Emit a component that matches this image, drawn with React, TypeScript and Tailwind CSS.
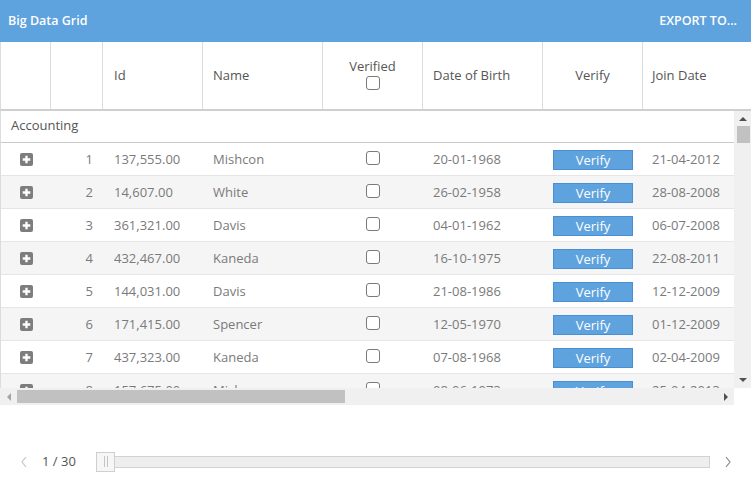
import { FC } from "react";

type Row = { n: number; id: string; name: string; dob: string; join: string };

const rows: Row[] = [
	{ n: 1, id: "137,555.00", name: "Mishcon", dob: "20-01-1968", join: "21-04-2012" },
	{ n: 2, id: "14,607.00", name: "White", dob: "26-02-1958", join: "28-08-2008" },
	{ n: 3, id: "361,321.00", name: "Davis", dob: "04-01-1962", join: "06-07-2008" },
	{ n: 4, id: "432,467.00", name: "Kaneda", dob: "16-10-1975", join: "22-08-2011" },
	{ n: 5, id: "144,031.00", name: "Davis", dob: "21-08-1986", join: "12-12-2009" },
	{ n: 6, id: "171,415.00", name: "Spencer", dob: "12-05-1970", join: "01-12-2009" },
	{ n: 7, id: "437,323.00", name: "Kaneda", dob: "07-08-1968", join: "02-04-2009" },
	{ n: 8, id: "157,675.00", name: "Mishcon", dob: "08-06-1973", join: "25-04-2013" },
];

const PlusIcon: FC = () => (
	<svg width="13" height="13" viewBox="0 0 13 13">
		<rect x="0" y="0" width="13" height="13" rx="2" fill="#7d7d7d" />
		<path d="M6.5 2.7v7.6M2.7 6.5h7.6" stroke="#fff" strokeWidth="2.3" />
	</svg>
);

const Checkbox: FC = () => <span className="block w-[14px] h-[14px] rounded-[3px] border border-[#7a7a7a] bg-white" />;

const Triangle: FC<{ dir: "up" | "down" | "left" | "right" }> = ({ dir }) => {
	const d = {
		up: "M0 5 L4 1 L8 5 Z",
		down: "M0 1 L4 5 L8 1 Z",
		left: "M5 0 L1 4 L5 8 Z",
		right: "M1 0 L5 4 L1 8 Z",
	}[dir];
	const vertical = dir === "up" || dir === "down";
	return (
		<svg width={vertical ? 8 : 6} height={vertical ? 6 : 8} viewBox={vertical ? "0 0 8 6" : "0 0 6 8"}>
			<path d={d} fill={dir === "left" ? "#a3a3a3" : "#505050"} />
		</svg>
	);
};

const App: FC = () => {
	return (
		<div className="w-[751px] h-[482px] bg-white overflow-hidden font-['Open_Sans',sans-serif] text-[13px] text-[#7a7a7a]">
			{/* title bar */}
			<div className="h-[42px] bg-[#5ea2de] flex items-center justify-between pl-[8px] pr-[14px] text-white text-[12.5px] font-semibold">
				<span>Big Data Grid</span>
				<span>EXPORT TO...</span>
			</div>

			{/* column headers */}
			<div className="flex h-[69px] border-b-2 border-[#cfcfcf] border-l border-l-[#dcdcdc] text-[#555] text-[13px] whitespace-nowrap">
				<div className="w-[50px] shrink-0 border-r border-[#dcdcdc]" />
				<div className="w-[52px] shrink-0 border-r border-[#dcdcdc]" />
				<div className="w-[100px] shrink-0 border-r border-[#dcdcdc] flex items-center pl-[11px]">Id</div>
				<div className="w-[120px] shrink-0 border-r border-[#dcdcdc] flex items-center pl-[10px]">Name</div>
				<div className="w-[100px] shrink-0 border-r border-[#dcdcdc] flex flex-col items-center justify-center gap-[1px] pb-[4px]">
					<span className="leading-[18px]">Verified</span>
					<Checkbox />
				</div>
				<div className="w-[120px] shrink-0 border-r border-[#dcdcdc] flex items-center pl-[10px]">Date of Birth</div>
				<div className="w-[100px] shrink-0 border-r border-[#dcdcdc] flex items-center justify-center">Verify</div>
				<div className="w-[110px] shrink-0 flex items-center pl-[9px]">Join Date</div>
			</div>

			{/* body with scrollbars */}
			<div className="flex h-[277px]">
				<div className="w-[734px] overflow-hidden border-l border-[#dcdcdc]">
					<div className="w-[760px]">
						<div className="h-[32px] flex items-center pl-[10px] pb-[1px] border-b border-[#c8c8c8] text-[#555]">
							Accounting
						</div>
						{rows.map((r, i) => (
							<div
								key={r.n}
								className={`flex h-[33px] items-center pt-[1px] border-b border-[#e6e6e6] whitespace-nowrap ${i % 2 === 1 ? "bg-[#f5f5f5]" : "bg-white"}`}
							>
								<div className="w-[50px] shrink-0 flex justify-center pb-[1px]">
									<PlusIcon />
								</div>
								<div className="w-[52px] shrink-0 text-right pr-[10px]">{r.n}</div>
								<div className="w-[100px] shrink-0 pl-[11px]">{r.id}</div>
								<div className="w-[120px] shrink-0 pl-[10px]">{r.name}</div>
								<div className="w-[100px] shrink-0 flex justify-center pb-[3px]">
									<Checkbox />
								</div>
								<div className="w-[120px] shrink-0 pl-[10px]">{r.dob}</div>
								<div className="w-[100px] shrink-0 flex justify-center">
									<button className="w-[80px] h-[20px] bg-[#5ea2de] border border-[#4a8fd6] text-white text-[13px] leading-[18px]">
										Verify
									</button>
								</div>
								<div className="w-[110px] shrink-0 pl-[9px]">{r.join}</div>
							</div>
						))}
					</div>
				</div>
				<div className="w-[17px] bg-[#f0f0f0] flex flex-col items-center">
					<div className="h-[15px] flex items-center justify-center">
						<Triangle dir="up" />
					</div>
					<div className="w-[13px] h-[17px] bg-[#c1c1c1] ml-[2px]" />
					<div className="flex-1" />
					<div className="h-[16px] flex items-center justify-center">
						<Triangle dir="down" />
					</div>
				</div>
			</div>
			<div className="flex h-[17px]">
				<div className="w-[734px] bg-[#f0f0f0] flex items-center">
					<div className="w-[17px] flex justify-center">
						<Triangle dir="left" />
					</div>
					<div className="w-[328px] h-[13px] bg-[#c1c1c1]" />
					<div className="flex-1" />
					<div className="w-[17px] flex justify-center">
						<Triangle dir="right" />
					</div>
				</div>
			</div>

			{/* pager */}
			<div className="h-[77px] flex items-center pl-[20px] pr-[19px] pt-[36px]">
				<svg width="8" height="12" viewBox="0 0 8 12" className="mr-[14px]">
					<path d="M6 1 L2 6 L6 11" stroke="#c4c4c4" strokeWidth="1.2" fill="none" />
				</svg>
				<span className="text-[13px] text-[#555] w-[54px]">1 / 30</span>
				<div className="flex-1 h-[12px] bg-[#eeeeee] border border-[#d2d2d2] relative">
					<div className="absolute left-[-1px] top-[-5px] w-[19px] h-[20px] bg-[#f6f6f6] border border-[#cfcfcf] flex items-center justify-center gap-[2px]">
						<span className="w-px h-[11px] bg-[#c4c4c4]" />
						<span className="w-px h-[11px] bg-[#c4c4c4]" />
					</div>
				</div>
				<svg width="8" height="12" viewBox="0 0 8 12" className="ml-[14px]">
					<path d="M2 1 L6 6 L2 11" stroke="#8a8a8a" strokeWidth="1.2" fill="none" />
				</svg>
			</div>
		</div>
	);
};

export default App;
